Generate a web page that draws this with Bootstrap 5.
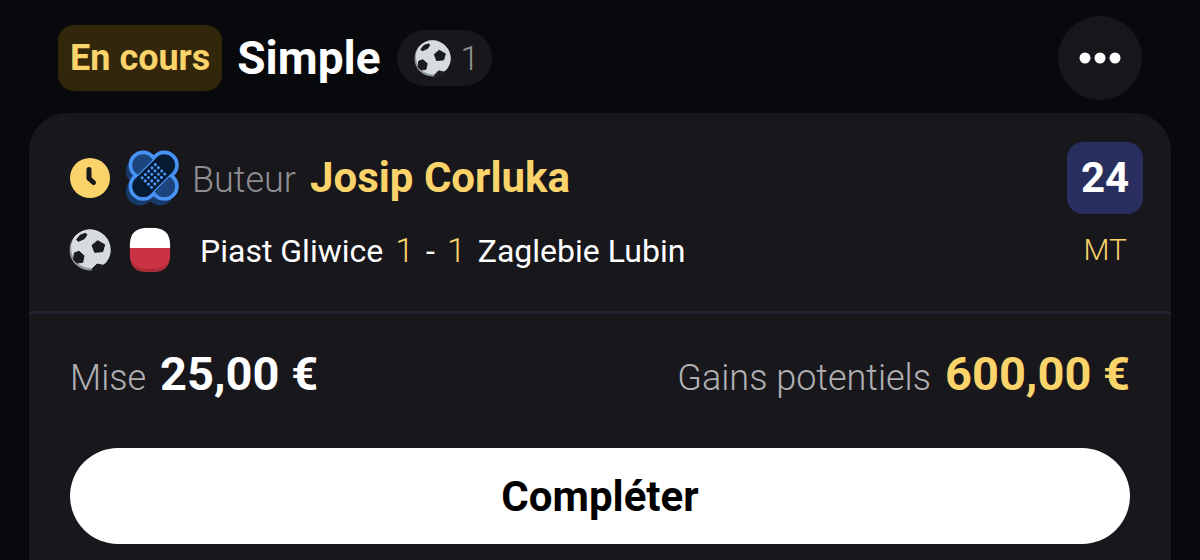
<!DOCTYPE html>
<html lang="fr">
<head>
<meta charset="utf-8">
<meta name="viewport" content="width=device-width, initial-scale=1">
<title>Pari simple en cours</title>
<link rel="stylesheet" href="https://cdn.jsdelivr.net/npm/bootstrap@5.3.0/dist/css/bootstrap.min.css">
<style>
  :root { --gold: #fad36a; --panel: #18171c; }
  body { background: #08090d; color: #fff; font-family: Roboto, "Liberation Sans", sans-serif; line-height: 1; }
  svg { display: block; flex: none; }
  .text-gold { color: var(--gold); }
  .text-dim { color: #8f8f93; }
  .text-soft { color: #b0b0b3; }
  .bet-head { padding: 16px 58px 13px; }
  .bet-state { background: #32260b; border-radius: 16px; padding: 0 12px; height: 66px; font-size: 36px; font-weight: 700; }
  .bet-title { font-size: 46px; font-weight: 700; line-height: 52px; margin-left: 15px; }
  .bet-count { background: var(--panel); height: 56px; padding: 0 13px 0 17px; margin-left: 16px; gap: 10px; font-size: 34px; font-weight: 300; }
  .more-btn { width: 84px; height: 84px; background: #17171b; padding: 0; }
  .bet-panel { background: var(--panel); border-radius: 38px 38px 0 0; margin: 0 29px; }
  .bet-event { padding: 29px 28px 25px 40px; }
  .event-row { height: 72px; }
  .event-icons { gap: 14px; width: 123px; }
  .match-icons { gap: 18px; width: 131px; }
  .size-label { font-size: 36px; font-weight: 300; }
  .size-name { font-size: 42px; font-weight: 700; }
  .size-team { font-size: 32px; font-weight: 400; }
  .size-score { font-size: 34px; font-weight: 300; }
  .size-time { font-size: 30px; font-weight: 300; }
  .size-sum { font-size: 47px; font-weight: 700; }
  .gap-sum { gap: 14px; }
  .bet-odds { background: #282f5e; width: 76px; height: 72px; border-radius: 16px; font-size: 42px; font-weight: 700; }
  .bet-foot { border-top: 3px solid #21222f; padding: 36px 41px 16px; }
  .complete-btn { height: 96px; margin-top: 51px; font-size: 42px; font-weight: 700; background: #fff; color: #000; }
  .complete-btn:hover { background: #eee; color: #000; }
</style>
</head>
<body>
<svg width="0" height="0" class="position-absolute" aria-hidden="true">
  <defs>
    <clipPath id="ballClip"><circle cx="63" cy="63" r="62"/></clipPath>
    <symbol id="ball" viewBox="0 0 126 126">
      <g clip-path="url(#ballClip)">
        <circle cx="63" cy="63" r="62" fill="#8d9499"/>
        <circle cx="67" cy="57" r="61" fill="#d5dbdf"/>
        <g fill="#1b1a1c" stroke="#1b1a1c" stroke-width="3" stroke-linejoin="round">
          <path d="M23 32 33 19 49 13 54 17 46 29 28 37z"/>
          <path d="M69 49 86 35 107 47 101 68 77 70z"/>
          <path d="M16 72 30 67 45 80 41 100 24 102 14 92z"/>
          <path d="M71 118 84 105 102 109 113 104 104 126 70 126z"/>
        </g>
      </g>
    </symbol>
  </defs>
</svg>

<header class="bet-head d-flex align-items-center">
  <span class="bet-state text-gold d-inline-flex align-items-center">En cours</span>
  <h1 class="bet-title mb-0">Simple</h1>
  <span class="bet-count rounded-pill d-inline-flex align-items-center text-dim">
    <svg width="37" height="37" aria-hidden="true"><use href="#ball"/></svg>1
  </span>
  <button type="button" class="btn more-btn rounded-circle ms-auto d-flex align-items-center justify-content-center" aria-label="Plus d'options">
    <svg width="42" height="12" viewBox="0 0 42 12" fill="#fff"><circle cx="6" cy="6" r="5.5"/><circle cx="21" cy="6" r="5.5"/><circle cx="36" cy="6" r="5.5"/></svg>
  </button>
</header>

<main class="bet-panel">
  <section class="bet-event d-flex justify-content-between">
    <div>
      <div class="event-row d-flex align-items-center">
        <div class="event-icons d-flex align-items-center flex-shrink-0">
          <svg width="42" height="42" viewBox="0 0 42 42" aria-hidden="true">
            <circle cx="21" cy="21" r="20" fill="#fad36a"/>
            <path d="M20 12.500V21.500L24.500 25.500" fill="none" stroke="#18171c" stroke-width="5" stroke-linecap="round" stroke-linejoin="round"/>
          </svg>
          <svg width="54" height="56" viewBox="0 0 160 168" aria-hidden="true">
            <g fill="#183a6b">
              <rect x="-42" y="-85" width="84" height="170" rx="42" transform="translate(74 94) rotate(45)"/>
              <rect x="-42" y="-85" width="84" height="170" rx="42" transform="translate(74 94) rotate(-45)"/>
            </g>
            <g stroke="#4793f5" stroke-width="11">
              <rect x="-38" y="-83" width="76" height="166" rx="38" fill="#1b447c" transform="translate(85 77) rotate(-45)"/>
              <rect x="-38" y="-83" width="76" height="166" rx="38" fill="#071a34" transform="translate(85 77) rotate(45)"/>
            </g>
            <g transform="translate(85 77) rotate(45)">
              <path d="M-39-32V32M39-32V32" stroke="#1b447c" stroke-width="10"/>
              <path d="M-34-36V36M34-36V36" stroke="#4793f5" stroke-width="3"/>
              <g stroke="#4c98f8" stroke-width="9" stroke-linecap="round" stroke-dasharray="0 14">
                <path d="M-20-27V30M-7-27V30M7-27V30M20-27V30"/>
              </g>
            </g>
          </svg>
        </div>
        <div class="d-flex align-items-baseline gap-sum">
          <span class="size-label text-dim">Buteur</span>
          <strong class="size-name text-gold">Josip Corluka</strong>
        </div>
      </div>
      <div class="event-row d-flex align-items-center">
        <div class="match-icons d-flex align-items-center flex-shrink-0">
          <svg width="42" height="42" aria-hidden="true"><use href="#ball"/></svg>
          <svg width="42" height="46" viewBox="0 0 126 138" role="img" aria-label="Pologne">
            <clipPath id="flagClip"><path d="M2 66C2 22 12 2 63 2S124 22 124 66V74C124 118 112 136 63 136S2 118 2 74Z"/></clipPath>
            <g clip-path="url(#flagClip)">
              <path fill="#fff" d="M0 0H126V64H0z"/>
              <path fill="#a82d38" d="M0 64H126V138H0z"/>
              <path fill="#cb3344" d="M0 64H126C125 112 108 126 63 126S1 112 0 64z"/>
            </g>
          </svg>
        </div>
        <div class="d-flex align-items-baseline">
          <span class="size-team">Piast Gliwice</span>
          <span class="size-score text-gold ms-2 ps-1">1</span>
          <span class="size-team mx-2 px-1">-</span>
          <span class="size-score text-gold">1</span>
          <span class="size-team ms-2 ps-1">Zaglebie Lubin</span>
        </div>
      </div>
    </div>
    <div class="d-flex flex-column align-items-end">
      <div class="bet-odds d-flex align-items-center justify-content-center">24</div>
      <div class="event-row d-flex align-items-center pe-3 size-time text-gold">MT</div>
    </div>
  </section>

  <section class="bet-foot">
    <div class="d-flex flex-wrap justify-content-between align-items-baseline">
      <div class="d-flex align-items-baseline gap-sum"><span class="size-label text-soft">Mise</span><strong class="size-sum">25,00 €</strong></div>
      <div class="d-flex align-items-baseline gap-sum"><span class="size-label text-soft">Gains potentiels</span><strong class="size-sum text-gold">600,00 €</strong></div>
    </div>
    <button type="button" class="btn complete-btn rounded-pill w-100 py-0">Compléter</button>
  </section>
</main>
<script src="https://cdn.jsdelivr.net/npm/bootstrap@5.3.0/dist/js/bootstrap.bundle.min.js"></script>
</body>
</html>
